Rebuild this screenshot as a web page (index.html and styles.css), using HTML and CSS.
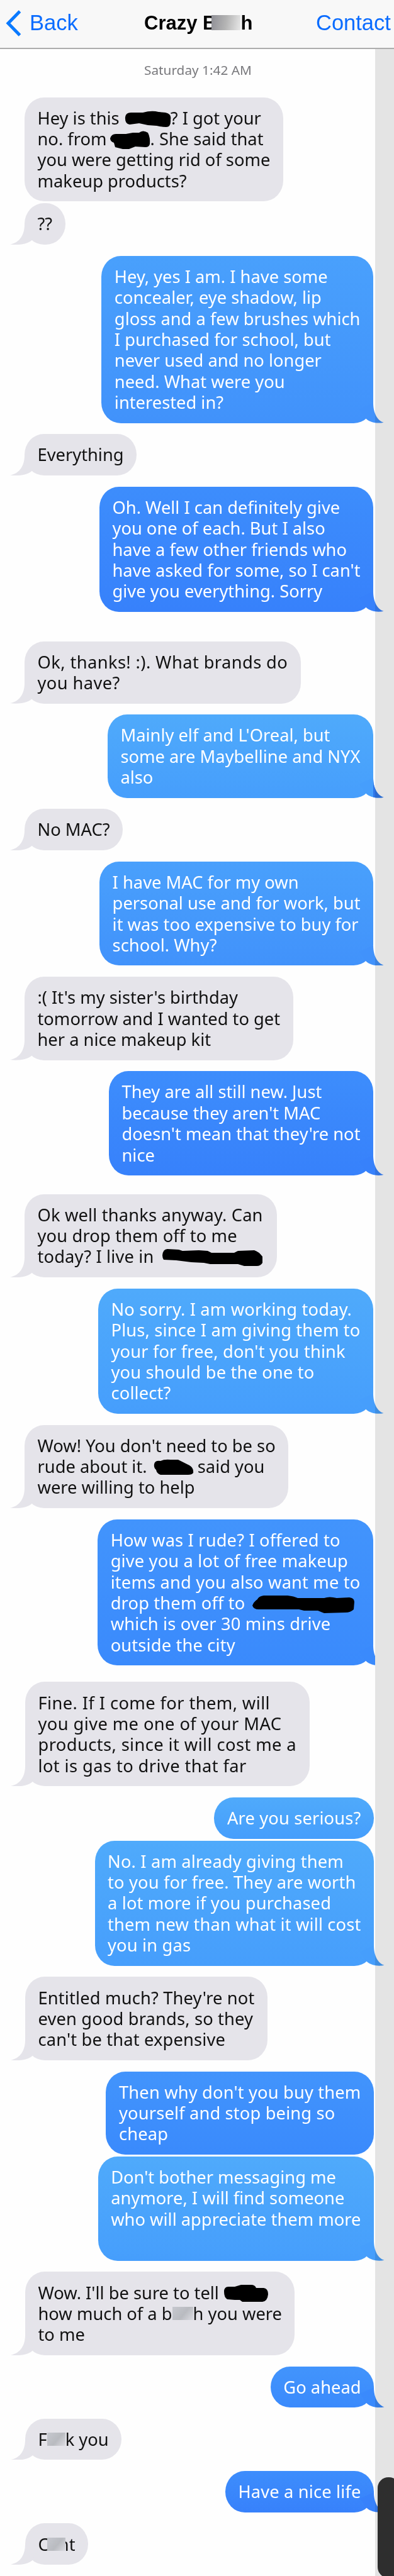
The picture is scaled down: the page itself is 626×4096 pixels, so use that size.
FILE: index.html
```html
<!DOCTYPE html>
<html lang="en">
<head>
    <meta charset="UTF-8">
    <meta name="viewport" content="width=device-width, initial-scale=1.0">
    <title>Messages</title>
    <link rel="stylesheet" href="styles.css">
</head>
<body>
    <header class="navbar">
        <a class="back">
            <svg class="chevron" width="25" height="42" viewBox="0 0 25 42"><path d="M22.5 2 L4 21 L22.5 40" fill="none" stroke="#0a7aff" stroke-width="5"/></svg>
            <span>Back</span>
        </a>
        <h1 class="title">Crazy B<span class="smudge smudge-title"></span>h</h1>
        <a class="contact">Contact</a>
    </header>

    <main class="thread">
        <div class="date">Saturday 1:42 AM</div>

        <div class="msg them no-tail">Hey is this <span class="redact r1"><svg viewBox="0 0 74 20"><path d="M2 8 Q3 1 11 1 L30 1 Q44 -3 55 0 L66 1 Q76 3 74 12 Q75 24 67 24 Q60 24 52 22 L38 21 L24 18 L9 20 Q1 19 2 8Z"/></svg></span>? I got your<br>no. from <span class="redact r2"><svg viewBox="0 0 62 20"><path d="M-2 9 Q0 2 7 2 L23 2 L34 0 L44 0 Q50 -5 58 0 Q62 8 61 18 Q60 23 54 23 L38 22 L28 26 L18 26 L6 23 L4 16 Q-2 14 -2 9Z"/></svg></span>. She said that<br>you were getting rid of some<br>makeup products?</div>
        <div class="msg them close">??</div>

        <div class="msg me tone2">Hey, yes I am. I have some<br>concealer, eye shadow, lip<br>gloss and a few brushes which<br>I purchased for school, but<br>never used and no longer<br>need. What were you<br>interested in?</div>
        <div class="msg them">Everything</div>
        <div class="msg me tone4">Oh. Well I can definitely give<br>you one of each. But I also<br>have a few other friends who<br>have asked for some, so I can't<br>give you everything. Sorry</div>

        <div class="msg them gap-lg looser">Ok, thanks! :). What brands do<br>you have?</div>
        <div class="msg me tone1 tail-dark">Mainly elf and L'Oreal, but<br>some are Maybelline and NYX<br>also</div>
        <div class="msg them">No MAC?</div>
        <div class="msg me tone2">I have MAC for my own<br>personal use and for work, but<br>it was too expensive to buy for<br>school. Why?</div>
        <div class="msg them">:( It's my sister's birthday<br>tomorrow and I wanted to get<br>her a nice makeup kit</div>
        <div class="msg me tone4">They are all still new. Just<br>because they aren't MAC<br>doesn't mean that they're not<br>nice</div>

        <div class="msg them gap-md loose">Ok well thanks anyway. Can<br>you drop them off to me<br>today? I live in <span class="redact r3"><svg viewBox="0 0 164 20"><path d="M4 8 Q5 -2 12 -2 L30 -1 L36 1 L62 0 L76 1 L82 4 L118 4 L124 1 L150 0 Q157 2 163 10 L163 20 Q160 25 154 25 L134 25 L124 22 L80 22 L70 20 L50 19 L26 16 L6 15 Q4 12 4 8Z"/></svg></span></div>
        <div class="msg me tone1 loose">No sorry. I am working today.<br>Plus, since I am giving them to<br>your for free, don't you think<br>you should be the one to<br>collect?</div>
        <div class="msg them">Wow! You don't need to be so<br>rude about it. <span class="redact r4"><svg viewBox="0 0 66 20"><path d="M4 6 Q5 0 14 1 Q20 -2 30 -1 L42 -1 L50 3 L60 8 Q67 12 66 20 Q64 23 58 23 L14 23 Q8 21 7 15 Q3 12 4 6Z"/></svg></span> said you<br>were willing to help</div>
        <div class="msg me tone3 tail-cut loose">How was I rude? I offered to<br>give you a lot of free makeup<br>items and you also want me to<br>drop them off to <span class="redact r5"><svg viewBox="0 0 166 20"><path d="M4 14 Q6 8 12 4 Q14 -1 22 -2 L60 -2 Q70 -1 76 2 L118 2 Q126 -1 138 2 L158 1 Q166 2 166 8 L165 20 Q160 25 152 25 L118 26 L108 22 L86 22 L78 20 L14 20 Q6 20 4 14Z"/></svg></span><br>which is over 30 mins drive<br>outside the city</div>

        <div class="shifted">
            <div class="msg them gap-sm looser">Fine. If I come for them, will<br>you give me one of your MAC<br>products, since it will cost me a<br>lot is gas to drive that far</div>
            <div class="msg me tone1 no-tail loose">Are you serious?</div>
            <div class="msg me tone1 close loose">No. I am already giving them<br>to you for free. They are worth<br>a lot more if you purchased<br>them new than what it will cost<br>you in gas</div>
            <div class="msg them loose">Entitled much? They're not<br>even good brands, so they<br>can't be that expensive</div>
            <div class="msg me tone3 no-tail loose">Then why don't you buy them<br>yourself and stop being so<br>cheap</div>
            <div class="msg me tone1 close">Don't bother messaging me<br>anymore, I will find someone<br>who will appreciate them more<br>&nbsp;</div>
            <div class="msg them">Wow. I'll be sure to tell <span class="redact r6"><svg viewBox="0 0 71 20"><path d="M1 8 Q1 0 8 0 L18 0 L28 -3 L44 -3 Q50 -3 52 2 L64 2 Q71 3 71 12 Q70 23 62 24 L30 24 L26 21 L18 21 L6 20 Q1 17 1 8Z"/></svg></span><br>how much of a b<span class="smudge smudge-b"></span>h you were<br>to me</div>
            <div class="msg me tone3">Go ahead</div>
            <div class="msg them">F<span class="smudge smudge-f"></span>k you</div>
            <div class="msg me tone4 loose">Have a nice life</div>
            <div class="msg them">C<span class="smudge smudge-c"></span>nt</div>
        </div>

        <div class="gutter"></div>
        <div class="thumb"></div>
    </main>
</body>
</html>
```
FILE: styles.css
```css
* {
    box-sizing: border-box;
}

body {
    margin: 0;
    width: 626px;
    height: 4096px;
    overflow: hidden;
    background-color: #fefefe;
    font-family: 'Noto Sans', 'Open Sans', sans-serif;
}

/* top bar */
.navbar {
    display: grid;
    grid-template-columns: 229px 1fr 124px;
    align-items: center;
    height: 78px;
    padding-bottom: 3px;
    background-color: #f8f8f8;
    border-bottom: 2px solid #adadad;
    font-family: 'Liberation Sans', Arial, sans-serif;
    white-space: nowrap;
}

.back,
.contact {
    color: #0a6cff;
    font-size: 34.5px;
}

.back {
    display: flex;
    align-items: center;
    gap: 12px;
    padding-left: 9px;
}

.chevron {
    margin-right: 1px;
}

.title {
    margin: 0;
    font-size: 31px;
    font-weight: bold;
    color: #000;
}

/* conversation */
.thread {
    position: relative;
    display: flex;
    flex-direction: column;
    height: 4018px;
    padding: 23px 0 0 39px;
}

.date {
    align-self: flex-start;
    height: 36px;
    margin: 0 0 17.5px 190px;
    line-height: 20px;
    font-size: 20.8px;
    color: #78787c;
}

.date,
.msg {
    white-space: nowrap;
}

.shifted {
    display: flex;
    flex-direction: column;
    margin-left: 1px;
    margin-right: -1px;
}

.msg {
    position: relative;
    align-self: flex-start;
    flex-shrink: 0;
    margin-top: 17.7px;
    padding: 16.1px 20.5px;
    border-radius: 31px / 32.8px;
    font-size: 27.3px;
    line-height: 33.4px;
}

.date + .msg {
    margin-top: 0;
}

.them {
    --tail: #e5e4ea;
    background-color: #e5e4ea;
    color: #111;
}

.me {
    align-self: flex-end;
    margin-right: 33px;
    background-image: linear-gradient(var(--top), var(--tail));
    color: #fff;
}

.loose {
    letter-spacing: 0.15px;
}

.looser {
    letter-spacing: 0.4px;
}

.msg.close { margin-top: 3px; }
.msg.gap-sm { margin-top: 26.2px; }
.msg.gap-md { margin-top: 29.5px; }
.msg.gap-lg { margin-top: 46.8px; }

.tone1 { --top: #4faafb; --tail: #469efc; }
.tone2 { --top: #49a0fc; --tail: #4192fb; }
.tone3 { --top: #4294fc; --tail: #3a8afc; }
.tone4 { --top: #3d8dfc; --tail: #3781fb; }

/* speech tails */
.msg::after {
    content: "";
    position: absolute;
    bottom: 0;
    width: 44px;
    height: 34px;
    background-color: var(--tail);
}

.them::after {
    left: -24px;
    clip-path: path("M24 2 C24 17 17 31 1 33.5 C12 35 28 34 35.5 27 L44 12 Z");
}

.me::after {
    right: -18px;
    clip-path: path("M26 2 C26 17 32 30 42.5 33 C34 35 22 34 14.5 27 L4 12 Z");
}

.tail-dark::after {
    background-image: linear-gradient(to right, transparent 26px, #2f76e8 26px);
}

.tail-cut::after {
    right: -3px;
    width: 29px;
}

.no-tail::after {
    display: none;
}

/* scroll track lies over the tails */
.gutter {
    position: absolute;
    top: 0;
    right: 0;
    bottom: 0;
    width: 30px;
    background-color: #e5e5e5;
    mix-blend-mode: multiply;
}

.thumb {
    position: absolute;
    right: -9px;
    bottom: -3px;
    width: 35px;
    height: 160px;
    border-radius: 17px;
    background-color: #2e2e2e;
}

/* scribbled out names */
.redact {
    position: relative;
    display: inline-block;
    height: 20px;
}

.redact svg {
    position: absolute;
    left: 0;
    bottom: 0;
    width: 100%;
    height: 20px;
    overflow: visible;
}

.r1 { width: 74px; }
.r2 { width: 62px; }
.r3 { width: 168px; }
.r4 { width: 66px; }
.r5 { width: 166px; }
.r6 { width: 71px; }

/* smudged letters */
.smudge {
    position: relative;
    display: inline-block;
    height: 21px;
    background-image: linear-gradient(130deg, #c6c8cf, #b9bbc0 55%, #dcdce2);
}

.smudge-title {
    width: 46px;
    height: 24px;
    margin-left: -8px;
    vertical-align: -1px;
    background-image: linear-gradient(100deg, #8f8f96, #b4b4b4 50%, #e8e8e8);
}

.smudge-b { width: 33px; }
.smudge-f { width: 29px; }

.smudge-c {
    width: 29px;
    margin-left: -3px;
    margin-right: -11px;
}
```
